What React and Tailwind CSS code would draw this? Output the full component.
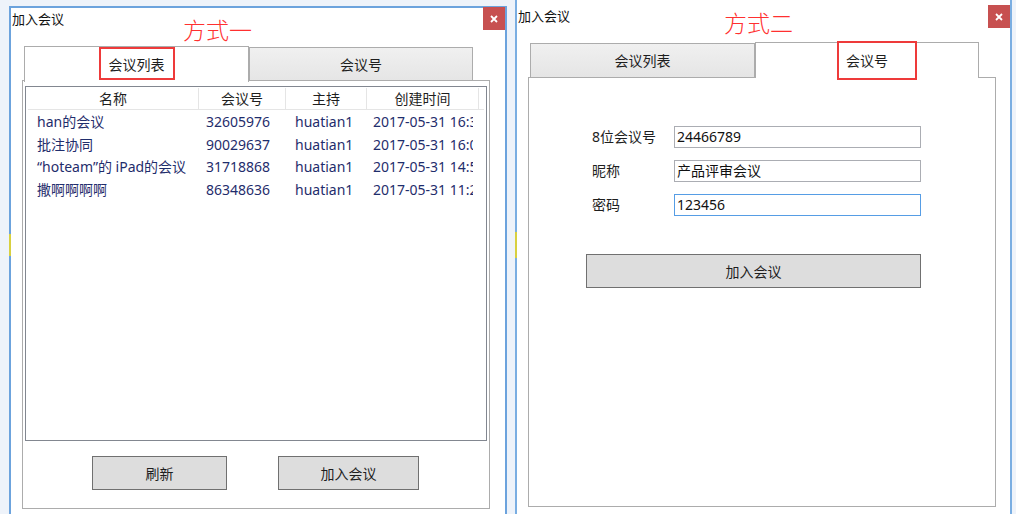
import React from 'react';

const rows = [
  { name: 'han的会议', id: '32605976', host: 'huatian1', time: '2017-05-31 16:32' },
  { name: '批注协同', id: '90029637', host: 'huatian1', time: '2017-05-31 16:05' },
  { name: '“hoteam”的 iPad的会议', id: '31718868', host: 'huatian1', time: '2017-05-31 14:50' },
  { name: '撒啊啊啊啊', id: '86348636', host: 'huatian1', time: '2017-05-31 11:20' },
];

const CloseButton = ({ className }) => (
  <div className={`absolute w-[22px] h-[23px] bg-[#c75050] flex items-center justify-center ${className}`}>
    <svg width="8" height="8" viewBox="0 0 8 8">
      <path d="M1 1 L7 7 M7 1 L1 7" stroke="#fff" strokeWidth="1.8" />
    </svg>
  </div>
);

const SelectedTab = ({ label, w }) => (
  <div className={`${w} h-[36px] border border-b-0 border-[#acacac] bg-white relative z-10 flex items-center justify-center text-[14px] text-[#1e1e1e]`}>
    {label}
  </div>
);

const Tab = ({ label, w }) => (
  <div className={`${w} h-[34px] mt-[1px] border border-b-0 border-[#acacac] bg-gradient-to-b from-[#f0f0f0] to-[#e5e5e5] flex items-center justify-center text-[14px] text-[#1e1e1e]`}>
    {label}
  </div>
);

const Button = ({ label, w }) => (
  <div className={`${w} h-[34px] border border-[#707070] bg-[#dddddd] flex items-center justify-center text-[14px] text-[#1e1e1e]`}>
    {label}
  </div>
);

const Field = ({ label, value, focused }) => (
  <div className="flex items-center h-[22px]">
    <div className="w-[82px] text-[14px] leading-[20px] text-[#1e1e1e]">{label}</div>
    <div className={`w-[247px] h-[22px] border ${focused ? 'border-[#569de5]' : 'border-[#abadb3]'} bg-white px-[2px] text-[14px] leading-[19px] text-[#111]`}>
      {value}
    </div>
  </div>
);

export default function App() {
  return (
    <div className="relative w-[1016px] h-[514px] overflow-hidden bg-[#eef3fa] flex font-['Noto_Sans','Noto_Sans_CJK_SC',sans-serif]">
      {/* left window */}
      <div className="relative mt-[6px] ml-[9px] w-[498px] h-[520px] shrink-0 border-l-2 border-t-2 border-r-2 border-[#6ca3dd] bg-white flex flex-col">
        <div className="h-[22px] pl-[1px] text-[13px] leading-[22px] text-[#111]">加入会议</div>
        <CloseButton className="top-[-1px] right-0" />
        <div className="mt-[16px] ml-[11px] w-[468px] flex flex-col">
          <div className="h-[34px] pl-[2px] flex items-start">
            <SelectedTab label="会议列表" w="w-[225px]" />
            <Tab label="会议号" w="w-[224px]" />
          </div>
          <div className="h-[429px] border border-[#acacac] px-[2px] pt-[5px] flex flex-col">
            <div className="h-[355px] border border-[#828790] px-[2px] pt-[1px] overflow-hidden">
              <div className="flex h-[22px] border-b border-[#e5e5e5] text-[14px] text-[#1e1e1e] leading-[21px]">
                <div className="w-[171px] text-center border-r border-[#e5e5e5]">名称</div>
                <div className="w-[87px] text-center border-r border-[#e5e5e5]">会议号</div>
                <div className="w-[81px] text-center border-r border-[#e5e5e5]">主持</div>
                <div className="w-[112px] text-center border-r border-[#e5e5e5]">创建时间</div>
                <div className="flex-1"></div>
              </div>
              {rows.map((r) => (
                <div key={r.id} className="flex h-[22.7px] items-center text-[14px] text-[#1f2d6c] whitespace-nowrap">
                  <div className="w-[171px] pl-[9px] overflow-hidden">{r.name}</div>
                  <div className="w-[87px] pl-[7px] overflow-hidden">{r.id}</div>
                  <div className="w-[81px] pl-[9px] overflow-hidden">{r.host}</div>
                  <div className="w-[106px] pl-[6px] overflow-hidden">{r.time}</div>
                </div>
              ))}
            </div>
            <div className="mt-[15px] flex">
              <div className="ml-[67px]"><Button label="刷新" w="w-[135px]" /></div>
              <div className="ml-[51px]"><Button label="加入会议" w="w-[141px]" /></div>
            </div>
          </div>
        </div>
      </div>

      {/* right window */}
      <div className="relative ml-[8px] w-[497px] h-[514px] shrink-0 border-l-2 border-r-2 border-[#7aaee2] bg-white flex flex-col">
        <div className="mt-[5px] h-[22px] pl-[1px] text-[13px] leading-[22px] text-[#111]">加入会议</div>
        <CloseButton className="top-[5px] right-0 h-[22px]" />
        <div className="mt-[15px] ml-[11px] w-[468px] flex flex-col">
          <div className="h-[35px] pl-[2px] flex items-start">
            <Tab label="会议列表" w="w-[225px]" />
            <SelectedTab label="会议号" w="w-[224px]" />
          </div>
          <div className="h-[430px] border border-[#acacac] flex flex-col">
            <div className="mt-[48px] pl-[63px] flex flex-col gap-[12px]">
              <Field label="8位会议号" value="24466789" />
              <Field label="昵称" value="产品评审会议" />
              <Field label="密码" value="123456" focused />
            </div>
            <div className="mt-[38px] ml-[57px]">
              <Button label="加入会议" w="w-[335px]" />
            </div>
          </div>
        </div>
      </div>

      {/* annotations */}
      <div className="absolute left-[183px] top-[16px] text-[23px] leading-[28px] font-light text-[#ff3030]">方式一</div>
      <div className="absolute left-[724px] top-[9px] text-[23px] leading-[28px] font-light text-[#ff3030]">方式二</div>
      <div className="absolute left-[99px] top-[47px] w-[76px] h-[33px] border-2 border-[#ee3a3a] z-20"></div>
      <div className="absolute left-[837px] top-[41px] w-[80px] h-[39px] border-2 border-[#ee3a3a] z-20"></div>
      <div className="absolute left-[515px] top-[232px] w-[2px] h-[26px] bg-[#d8d040]"></div>
      <div className="absolute left-[9px] top-[234px] w-[2px] h-[22px] bg-[#d8d040]"></div>
    </div>
  );
}
